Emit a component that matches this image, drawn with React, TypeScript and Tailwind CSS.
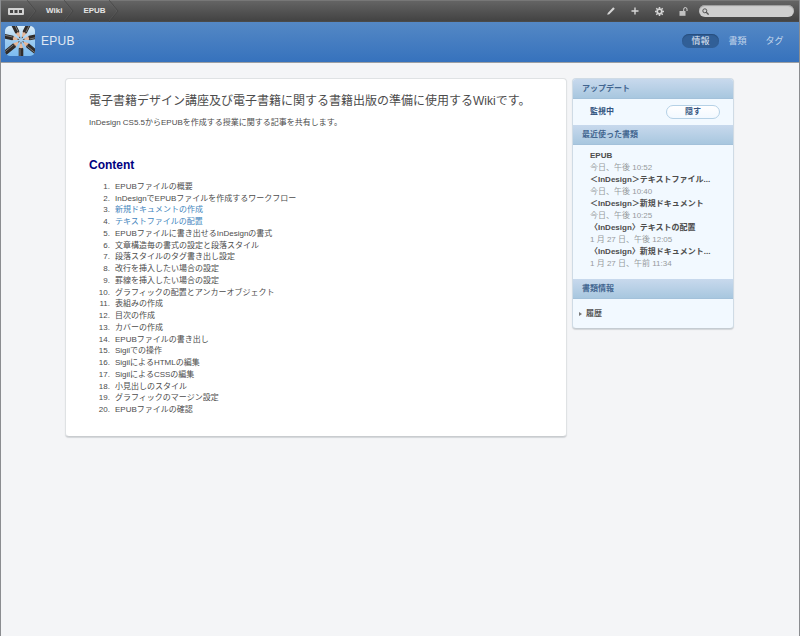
import React from 'react';

const contents = [
  { title: 'EPUBファイルの概要' },
  { title: 'InDesignでEPUBファイルを作成するワークフロー' },
  { title: '新規ドキュメントの作成', href: '#new-document' },
  { title: 'テキストファイルの配置', href: '#place-text' },
  { title: 'EPUBファイルに書き出せるInDesignの書式' },
  { title: '文章構造毎の書式の設定と段落スタイル' },
  { title: '段落スタイルのタグ書き出し設定' },
  { title: '改行を挿入したい場合の設定' },
  { title: '罫線を挿入したい場合の設定' },
  { title: 'グラフィックの配置とアンカーオブジェクト' },
  { title: '表組みの作成' },
  { title: '目次の作成' },
  { title: 'カバーの作成' },
  { title: 'EPUBファイルの書き出し' },
  { title: 'Sigilでの操作' },
  { title: 'SigilによるHTMLの編集' },
  { title: 'SigilによるCSSの編集' },
  { title: '小見出しのスタイル' },
  { title: 'グラフィックのマージン設定' },
  { title: 'EPUBファイルの確認' },
];

const recent = [
  { title: 'EPUB', date: '今日、午後 10:52' },
  { title: '＜InDesign＞テキストファイル...', date: '今日、午後 10:40' },
  { title: '＜InDesign＞新規ドキュメント', date: '今日、午後 10:25' },
  { title: '〈InDesign〉テキストの配置', date: '1 月 27 日、午後 12:05' },
  { title: '〈InDesign〉新規ドキュメント...', date: '1 月 27 日、午前 11:34' },
];

const pencils = [0, 51, 103, 154, 206, 257, 309];

const Chevron = () => (
  <svg className="h-[22px] w-[10px] shrink-0" viewBox="0 0 10 22" fill="none">
    <path d="M0 0 9 11 0 22" stroke="#404040" strokeOpacity=".6" />
    <path d="M-1 0 8 11 -1 22" stroke="#6a6a6a" strokeOpacity=".3" />
  </svg>
);

const Avatar = () => (
  <svg className="size-[30px] shrink-0 rounded-[5px]" viewBox="0 0 30 30">
    <defs>
      <linearGradient id="sky" x1="0" y1="0" x2="0" y2="1">
        <stop offset="0" stopColor="#dceefa" />
        <stop offset=".5" stopColor="#9ccbf0" />
        <stop offset="1" stopColor="#7dbcf0" />
      </linearGradient>
    </defs>
    <rect width="30" height="30" fill="url(#sky)" />
    {pencils.map((angle) => (
      <g key={angle} transform={`rotate(${angle} 16 14)`}>
        <path d="M16 16 18.300 22.500H13.700Z" fill="#e6b798" />
        <path d="M16 15.500 16.700 17.500H15.300Z" fill="#444" />
        <path d="M13.700 22.500 14.800 21.700 16 22.500 17.200 21.700 18.300 22.500V36H13.700Z" fill="#302c2a" />
        <path d="M15 23V36" stroke="#858585" strokeWidth=".8" />
      </g>
    ))}
    <circle cx="16" cy="14" r="1.500" fill="#a9cbe4" />
  </svg>
);

const ToolButton = ({ label, children }: { label: string; children: React.ReactNode }) => (
  <button type="button" aria-label={label} className="flex size-3 items-center justify-center text-[#d6d6d6]">
    {children}
  </button>
);

const PanelTitle = ({ children }: { children: React.ReactNode }) => (
  <h2 className="h-5 border-b border-[#a3c1da] bg-linear-to-b from-[#c8d9ed] to-[#a8c7df] px-[9px] text-[8px] leading-[19px] font-bold text-[#42658f]">
    {children}
  </h2>
);

const TopBar = () => (
  <header className="flex h-[22px] items-center justify-between border-t border-[#777] border-b border-b-[#4a4a4a] bg-linear-to-b from-[#646464] to-[#434343] pr-[5px]">
    <nav className="flex items-center text-[8px] font-bold text-[#e4e4e4]">
      <a href="#home" aria-label="ホーム" className="pr-[3px] pl-[7px]">
        <svg className="h-[7px] w-4" viewBox="0 0 16 7">
          <rect width="16" height="7" rx="1" fill="#d2d2d2" />
          <path d="M2 2h3v3H2zM6.500 2h3v3h-3zM11 2h3v3h-3z" fill="#444" />
        </svg>
      </a>
      <Chevron />
      <a href="#wiki" className="pr-[2px] pl-[9px]">Wiki</a>
      <Chevron />
      <a href="#epub" className="pr-[3px] pl-[9px]">EPUB</a>
      <Chevron />
    </nav>
    <div className="flex items-center gap-3">
      <ToolButton label="編集">
        <svg className="size-2" viewBox="0 0 8 8">
          <path d="M.2 7.800.8 5.900 6.200.3 7.800 1.800 2.300 7.300Z" fill="currentColor" />
        </svg>
      </ToolButton>
      <ToolButton label="追加">
        <svg className="size-2" viewBox="0 0 8 8">
          <path d="M4 .5V7.500M.5 4H7.500" stroke="currentColor" strokeWidth="1.400" />
        </svg>
      </ToolButton>
      <ToolButton label="設定">
        <svg className="size-[9px]" viewBox="0 0 9 9" fill="none" stroke="currentColor">
          <circle cx="4.500" cy="4.500" r="2.300" strokeWidth="1.700" />
          <path d="M4.500 0V1.800M4.500 7.200V9M0 4.500H1.800M7.200 4.500H9M1.300 1.300 2.500 2.500M6.500 6.500 7.700 7.700M1.300 7.700 2.500 6.500M6.500 2.500 7.700 1.300" strokeWidth="1.500" />
        </svg>
      </ToolButton>
      <ToolButton label="ロック">
        <svg className="size-[9px]" viewBox="0 0 9 9">
          <path d="M.5 4h6v4.800h-6z" fill="currentColor" fillOpacity=".85" />
          <path d="M4.700 4V2.200a1.600 1.600 0 0 1 3.300 0V4" fill="none" stroke="currentColor" />
        </svg>
      </ToolButton>
      <label className="-ml-0.5 flex h-3 w-[95px] items-center rounded-full bg-[#cfcfcf] pl-[3px] shadow-[inset_0_1px_1px_#999]">
        <svg className="size-[7px] shrink-0" viewBox="0 0 7 7" fill="none" stroke="#555">
          <circle cx="2.800" cy="2.800" r="2" />
          <path d="M4.300 4.300 6.600 6.600" strokeWidth="1.300" />
        </svg>
        <input type="search" aria-label="検索" className="h-3 min-w-0 flex-1 bg-transparent px-1 text-[8px] outline-none" />
      </label>
    </div>
  </header>
);

const Banner = () => (
  <div className="flex h-[41px] items-center justify-between border-b border-[#9c9fa3] bg-linear-to-b from-[#5488c5] to-[#3672bd] pr-[6px] pb-0.5 pl-1">
    <div className="flex items-center gap-[6px]">
      <Avatar />
      <h1 className="text-[12px] leading-4 tracking-wide text-[#e0e9f4]">EPUB</h1>
    </div>
    <nav className="flex items-center text-[9px] leading-[14px] text-[#c3d5ea]">
      <a href="#info" className="w-[37px] rounded-full bg-[#315f97] text-center text-[#e0e9f4] shadow-[inset_0_1px_1px_#274d7c]">情報</a>
      <a href="#documents" className="w-[37px] text-center">書類</a>
      <a href="#tags" className="w-[37px] text-center">タグ</a>
    </nav>
  </div>
);

const Article = () => (
  <main className="min-w-0 flex-1 rounded border border-[#dfe2e4] border-b-[#c9cccf] bg-white px-[23px] pt-[14px] pb-5 text-[#4c4c4c] shadow-[0_1px_1px_#d3d6d9]">
    <p className="text-[12px] leading-4">電子書籍デザイン講座及び電子書籍に関する書籍出版の準備に使用するWikiです。</p>
    <p className="mt-2 leading-3">InDesign CS5.5からEPUBを作成する授業に関する記事を共有します。</p>
    <h2 className="mt-7 text-[12px] leading-4 font-bold text-[#000080]">Content</h2>
    <ol className="mt-2 grid h-[235px] auto-rows-fr">
      {contents.map((item, index) => (
        <li key={item.title} className="flex items-center gap-[5px] leading-3">
          <span className="w-[21px] text-right">{index + 1}.</span>
          {item.href ? <a href={item.href} className="text-[#4385bd]">{item.title}</a> : <span>{item.title}</span>}
        </li>
      ))}
    </ol>
  </main>
);

const Sidebar = () => (
  <aside className="w-[162px] shrink-0 overflow-hidden rounded border border-[#cfdbe5] border-b-[#c5ccd2] bg-[#f2f9ff] text-[8px] shadow-[0_1px_1px_#d3d6d9]">
    <PanelTitle>アップデート</PanelTitle>
    <div className="flex h-[26px] items-center justify-between pr-[13px] pl-[17px] font-bold text-[#34557f]">
      <span>監視中</span>
      <button type="button" className="h-[14px] w-[54px] rounded-full border border-[#b5d1e6] bg-linear-to-b from-white to-[#f2f9ff] leading-3 font-bold">隠す</button>
    </div>
    <PanelTitle>最近使った書類</PanelTitle>
    <ul className="pt-[5px] pb-[9px] pl-[17px] leading-3 whitespace-nowrap">
      {recent.map((doc) => (
        <li key={doc.title}>
          <a href="#doc" className="block h-3 font-bold text-[#4c4c4c]">{doc.title}</a>
          <p className="h-3 text-[#96999c]">{doc.date}</p>
        </li>
      ))}
    </ul>
    <PanelTitle>書類情報</PanelTitle>
    <button type="button" className="flex h-[29px] items-center gap-1 pl-[6px] font-bold text-[#555]">
      <svg className="h-1 w-[3px]" viewBox="0 0 3 4">
        <path d="M0 0 3 2 0 4Z" fill="#777" />
      </svg>
      履歴
    </button>
  </aside>
);

export default function App() {
  return (
    <div className="min-h-screen border-x border-[#8b8d90] bg-[#f4f5f7] font-['Liberation_Sans','Noto_Sans_CJK_JP',sans-serif] text-[8px]">
      <TopBar />
      <Banner />
      <div className="pt-[15px] pr-px">
        <div className="mx-auto flex max-w-[669px] items-start gap-[5px]">
          <Article />
          <Sidebar />
        </div>
      </div>
    </div>
  );
}
